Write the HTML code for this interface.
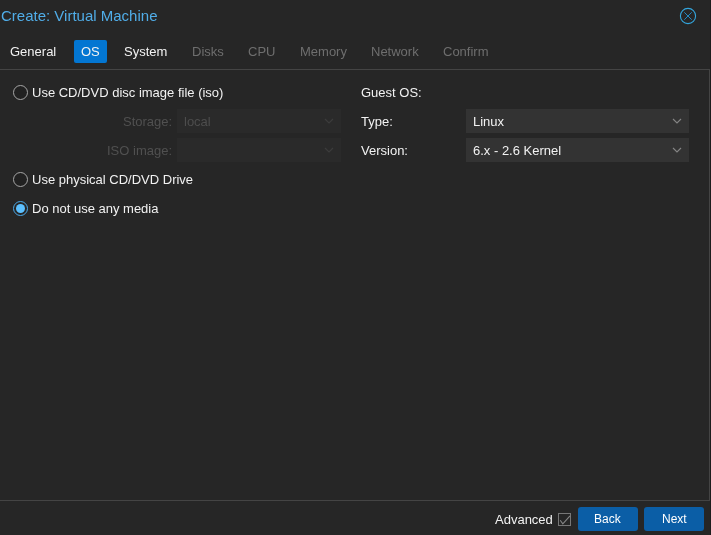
<!DOCTYPE html>
<html><head><meta charset="utf-8">
<style>
html,body{margin:0;padding:0;}
body{width:711px;height:535px;background:#262626;position:relative;overflow:hidden;font-family:"Liberation Sans",sans-serif;font-size:13px;color:#f2f2f2;}
.a{position:absolute;white-space:nowrap;line-height:1;will-change:transform;}
.title{left:1px;top:8px;font-size:15px;color:#50ade8;}
.tab{top:45px;}
.dis{color:#6e6e6e;}
.ostab{position:absolute;left:74px;top:40px;width:33px;height:23px;background:#0376d2;border-radius:2px;}
.hline{position:absolute;height:1px;background:#444;}
.vline{position:absolute;width:1px;background:#444;}
.radio{position:absolute;width:13px;height:13px;border:1px solid #a6a6a6;border-radius:50%;background:#212121;}
.field{position:absolute;background:#333;}
.chev{position:absolute;will-change:transform;}
.btn{position:absolute;background:#0b5ea6;border-radius:3px;color:#fff;text-align:center;}
</style></head>
<body>
<div class="a title">Create: Virtual Machine</div>
<svg class="a" style="left:679px;top:7px" width="18" height="18" viewBox="0 0 18 18"><circle cx="9" cy="9" r="7.6" fill="none" stroke="#33a5dc" stroke-width="1.1"/><path d="M5.3 5.3L12.7 12.7M12.7 5.3L5.3 12.7" stroke="#2389c2" stroke-width="1"/></svg>

<div class="ostab"></div>
<div class="a tab" style="left:10px">General</div>
<div class="a tab" style="left:81px">OS</div>
<div class="a tab" style="left:124px">System</div>
<div class="a tab dis" style="left:192px">Disks</div>
<div class="a tab dis" style="left:248px">CPU</div>
<div class="a tab dis" style="left:300px">Memory</div>
<div class="a tab dis" style="left:371px">Network</div>
<div class="a tab dis" style="left:443px">Confirm</div>

<div class="hline" style="left:0;top:69px;width:710px"></div>
<div class="vline" style="left:709px;top:69px;height:432px"></div>
<div class="hline" style="left:0;top:500px;width:710px"></div>

<div class="radio" style="left:13px;top:85px"></div>
<div class="a" style="left:32px;top:86px">Use CD/DVD disc image file (iso)</div>

<div class="a dis" style="left:123px;top:115px;color:#505050">Storage:</div>
<div class="field" style="left:177px;top:109px;width:164px;height:24px;background:#2a2a2a"></div><svg class="chev" style="left:324px;top:116.6px" width="10" height="8" viewBox="0 0 10 8"><path d="M1 2L5 6L9 2" fill="none" stroke="#3c3c3c" stroke-width="1.2"/></svg>
<div class="a" style="left:184px;top:115px;color:#4d4d4d">local</div>
<div class="a dis" style="left:107px;top:144px;color:#505050">ISO image:</div>
<div class="field" style="left:177px;top:138px;width:164px;height:24px;background:#2a2a2a"></div><svg class="chev" style="left:324px;top:145.6px" width="10" height="8" viewBox="0 0 10 8"><path d="M1 2L5 6L9 2" fill="none" stroke="#3c3c3c" stroke-width="1.2"/></svg>

<div class="radio" style="left:13px;top:172px"></div>
<div class="a" style="left:32px;top:173px">Use physical CD/DVD Drive</div>
<div class="radio" style="left:13px;top:201px;border-color:#4aa8e8;background:#262626"></div>
<div style="position:absolute;left:16px;top:204px;width:9px;height:9px;border-radius:50%;background:#5cc0ff"></div>
<div class="a" style="left:32px;top:202px">Do not use any media</div>

<div class="a" style="left:361px;top:86px">Guest OS:</div>
<div class="a" style="left:361px;top:115px">Type:</div>
<div class="field" style="left:466px;top:109px;width:223px;height:24px"></div><svg class="chev" style="left:672px;top:116.6px" width="10" height="8" viewBox="0 0 10 8"><path d="M1 2L5 6L9 2" fill="none" stroke="#858585" stroke-width="1.1"/></svg>
<div class="a" style="left:473px;top:115px">Linux</div>
<div class="a" style="left:361px;top:144px">Version:</div>
<div class="field" style="left:466px;top:138px;width:223px;height:24px"></div><svg class="chev" style="left:672px;top:145.6px" width="10" height="8" viewBox="0 0 10 8"><path d="M1 2L5 6L9 2" fill="none" stroke="#858585" stroke-width="1.1"/></svg>
<div class="a" style="left:473px;top:144px">6.x - 2.6 Kernel</div>

<div class="a" style="left:495px;top:513px">Advanced</div>
<svg class="a" style="left:557px;top:512px" width="15" height="15" viewBox="0 0 15 15"><rect x="1.5" y="1.5" width="12" height="12" fill="none" stroke="#777" stroke-width="1"/><path d="M3.2 8.2L5.8 11.8L13 3.8" fill="none" stroke="#858585" stroke-width="1.1"/></svg>
<div class="btn" style="left:578px;top:507px;width:60px;height:24px;"></div>
<div class="a" style="left:594px;top:513px;font-size:12px;color:#fff">Back</div>
<div class="btn" style="left:644px;top:507px;width:60px;height:24px;"></div>
<div class="a" style="left:662px;top:513px;font-size:12px;color:#fff">Next</div>
<div style="position:absolute;left:710px;top:0;width:1px;height:535px;background:#1d1d1d"></div>
</body></html>
